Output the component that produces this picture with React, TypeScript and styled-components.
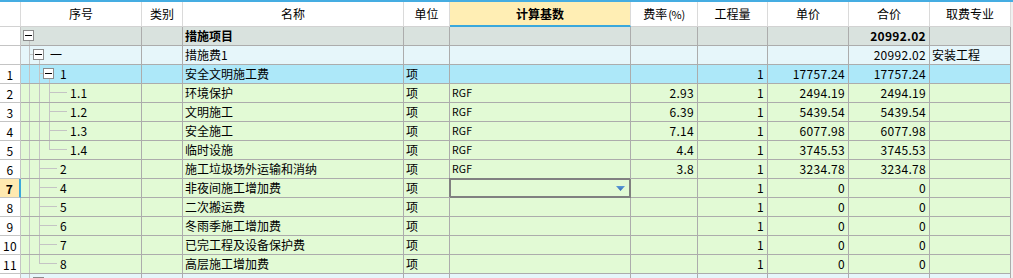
import React from 'react';
import styled, { createGlobalStyle, css } from 'styled-components';

const GlobalStyle = createGlobalStyle`
  *, *::before, *::after { box-sizing: border-box; }
  html, body { margin: 0; padding: 0; overflow: hidden; background: #f0f0f0; }
  body {
    font-family: "Noto Sans CJK SC", "Noto Sans", sans-serif;
    font-size: 12px;
    color: #000;
  }
`;

const COLS = '21px 121px 41px 221px 46px 181px 67px 70px 81px 81px 81px';

type Tone = 'head' | 'group' | 'current' | 'item';
const tones: Record<Tone, string> = {
  head: '#d9e2de',
  group: '#e6f6fa',
  current: '#ade8f9',
  item: '#e2fad5',
};

const Sheet = styled.div`
  width: 1013px;
  height: 278px;
  overflow: hidden;
  border-top: 2px solid #45ade2;
  display: flex;
  flex-direction: column;
`;

const Table = styled.div`
  width: 1011px;
  border-right: 1px solid #9c9c9c;
  background: #fff;
`;

const HeaderRow = styled.div`
  display: grid;
  grid-template-columns: ${COLS};
  height: 25px;
`;

const HeaderCell = styled.div<{ $active?: boolean }>`
  display: flex;
  align-items: center;
  justify-content: center;
  background: #fff;
  border-right: 1px solid #dadada;
  border-bottom: 1px solid #d2d2d2;
  white-space: nowrap;
  line-height: 18px;
  ${(p) =>
    p.$active &&
    css`
      background: #ffeeb4;
      font-weight: bold;
      border-bottom: 2px solid #3aa8dc;
    `}
`;

const Small = styled.span`
  font-size: 11px;
  margin-left: 1px;
  letter-spacing: -0.3px;
`;

const Row = styled.div<{ $tone: Tone }>`
  display: grid;
  grid-template-columns: ${COLS};
  height: 19px;
  background: ${(p) => tones[p.$tone]};
`;

const Cell = styled.div<{ $right?: boolean; $bold?: boolean }>`
  display: flex;
  align-items: center;
  justify-content: ${(p) => (p.$right ? 'flex-end' : 'flex-start')};
  padding: 0 3px 0 2px;
  border-right: 1px solid #acacac;
  border-bottom: 1px solid #acacac;
  white-space: nowrap;
  overflow: hidden;
  line-height: 18px;
  font-weight: ${(p) => (p.$bold ? 'bold' : 'normal')};
`;

const NumCell = styled.div<{ $current?: boolean }>`
  display: flex;
  align-items: center;
  justify-content: center;
  background: #fff;
  border-right: 1px solid #c4c4c4;
  border-bottom: 1px solid #c4c4c4;
  ${(p) =>
    p.$current &&
    css`
      background: #ffe9b0;
      font-weight: bold;
      border-right: 2px solid #3aa8dc;
    `}
`;

const Digits = styled.span<{ $bold?: boolean }>`
  font-variant-numeric: tabular-nums;
  letter-spacing: 0.3px;
  font-weight: ${(p) => (p.$bold ? 'bold' : 'normal')};
`;

const Code = styled.span`
  font-size: 10.5px;
  letter-spacing: 0.2px;
`;

type Seg = [number, number, number, number];

const TreeCell = styled(Cell)<{ $segs: Seg[]; $indent: number }>`
  padding-left: ${(p) => p.$indent}px;
  gap: 6px;
  background-image: ${(p) =>
    p.$segs.length ? p.$segs.map(() => 'linear-gradient(#c4c4c4, #c4c4c4)').join(', ') : 'none'};
  background-size: ${(p) => p.$segs.map((s) => `${s[2]}px ${s[3]}px`).join(', ') || 'auto'};
  background-position: ${(p) => p.$segs.map((s) => `${s[0]}px ${s[1]}px`).join(', ') || '0 0'};
  background-repeat: no-repeat;
`;

const Toggle = styled.span`
  flex: none;
  width: 11px;
  height: 11px;
  margin-top: -1px;
  border: 1px solid #8c8c8c;
  background: #fff;
  display: flex;
  align-items: center;
  justify-content: center;
  &::before {
    content: '';
    width: 7px;
    height: 1px;
    background: #000;
  }
`;

const EditCell = styled(Cell)`
  justify-content: flex-end;
  padding-right: 5px;
  border-right-color: #808080;
  border-bottom-color: #808080;
  box-shadow: inset 1px 1px 0 #808080, inset -1px -1px 0 #808080, -1px -1px 0 0 #808080;
`;

const Arrow = () => (
  <svg width="9" height="5" viewBox="0 0 9 5">
    <defs>
      <linearGradient id="ag" x1="0" y1="0" x2="0" y2="1">
        <stop offset="0" stopColor="#5b9ad8" />
        <stop offset="1" stopColor="#2f68b0" />
      </linearGradient>
    </defs>
    <path d="M0 0 H9 L4.5 5 Z" fill="url(#ag)" />
  </svg>
);

const V0: Seg = [8, 0, 1, 19];
const V1: Seg = [18, 0, 1, 19];
const V2: Seg = [28, 0, 1, 19];

type Tree = { box?: boolean; indent: number; label?: string; segs: Seg[] };
type Data = {
  num?: string;
  tone: Tone;
  tree: Tree;
  name?: string;
  bold?: boolean;
  unit?: string;
  base?: string;
  rate?: string;
  qty?: string;
  price?: string;
  total?: string;
  spec?: string;
  editing?: boolean;
  current?: boolean;
};

const leaf3 = (label: string, last = false): Tree => ({
  indent: 49,
  label,
  segs: last ? [V0, V1, [28, 0, 1, 9], [28, 8, 18, 1]] : [V0, V1, V2, [28, 8, 18, 1]],
});
const leaf2 = (label: string, last = false): Tree => ({
  indent: 39,
  label,
  segs: last ? [V0, [18, 0, 1, 9], [18, 8, 18, 1]] : [V0, V1, [18, 8, 18, 1]],
});

const rows: Data[] = [
  { tone: 'head', tree: { box: true, indent: 2, segs: [[8, 14, 1, 5]] }, name: '措施项目', bold: true, total: '20992.02' },
  {
    tone: 'group',
    tree: { box: true, indent: 12, label: '一', segs: [V0, [8, 8, 4, 1], [18, 14, 1, 5]] },
    name: '措施费1',
    total: '20992.02',
    spec: '安装工程',
  },
  {
    num: '1',
    tone: 'current',
    tree: { box: true, indent: 22, label: '1', segs: [V0, V1, [18, 8, 4, 1], [28, 14, 1, 5]] },
    name: '安全文明施工费',
    unit: '项',
    qty: '1',
    price: '17757.24',
    total: '17757.24',
  },
  { num: '2', tone: 'item', tree: leaf3('1.1'), name: '环境保护', unit: '项', base: 'RGF', rate: '2.93', qty: '1', price: '2494.19', total: '2494.19' },
  { num: '3', tone: 'item', tree: leaf3('1.2'), name: '文明施工', unit: '项', base: 'RGF', rate: '6.39', qty: '1', price: '5439.54', total: '5439.54' },
  { num: '4', tone: 'item', tree: leaf3('1.3'), name: '安全施工', unit: '项', base: 'RGF', rate: '7.14', qty: '1', price: '6077.98', total: '6077.98' },
  { num: '5', tone: 'item', tree: leaf3('1.4', true), name: '临时设施', unit: '项', base: 'RGF', rate: '4.4', qty: '1', price: '3745.53', total: '3745.53' },
  { num: '6', tone: 'item', tree: leaf2('2'), name: '施工垃圾场外运输和消纳', unit: '项', base: 'RGF', rate: '3.8', qty: '1', price: '3234.78', total: '3234.78' },
  { num: '7', tone: 'item', tree: leaf2('4'), name: '非夜间施工增加费', unit: '项', qty: '1', price: '0', total: '0', editing: true, current: true },
  { num: '8', tone: 'item', tree: leaf2('5'), name: '二次搬运费', unit: '项', qty: '1', price: '0', total: '0' },
  { num: '9', tone: 'item', tree: leaf2('6'), name: '冬雨季施工增加费', unit: '项', qty: '1', price: '0', total: '0' },
  { num: '10', tone: 'item', tree: leaf2('7'), name: '已完工程及设备保护费', unit: '项', qty: '1', price: '0', total: '0' },
  { num: '11', tone: 'item', tree: leaf2('8', true), name: '高层施工增加费', unit: '项', qty: '1', price: '0', total: '0' },
  { tone: 'group', tree: { box: true, indent: 12, segs: [V0, [8, 8, 4, 1]] } },
];

const headers = ['序号', '类别', '名称', '单位', '计算基数', '费率', '工程量', '单价', '合价', '取费专业'];

const num = (v?: string, bold?: boolean) => (v ? <Digits $bold={bold}>{v}</Digits> : null);

export default function App() {
  return (
    <>
      <GlobalStyle />
      <Sheet>
        <Table>
          <HeaderRow>
            <HeaderCell />
            {headers.map((h) => (
              <HeaderCell key={h} $active={h === '计算基数'}>
                {h}
                {h === '费率' && <Small>(%)</Small>}
              </HeaderCell>
            ))}
          </HeaderRow>
          {rows.map((r, i) => (
            <Row key={i} $tone={r.tone}>
              <NumCell $current={r.current}>{num(r.num, r.current)}</NumCell>
              <TreeCell $segs={r.tree.segs} $indent={r.tree.indent}>
                {r.tree.box && <Toggle />}
                {r.tree.label && <Digits>{r.tree.label}</Digits>}
              </TreeCell>
              <Cell />
              <Cell $bold={r.bold}>{r.name}</Cell>
              <Cell>{r.unit}</Cell>
              {r.editing ? (
                <EditCell>
                  <Arrow />
                </EditCell>
              ) : (
                <Cell>{r.base && <Code>{r.base}</Code>}</Cell>
              )}
              <Cell $right>{num(r.rate)}</Cell>
              <Cell $right>{num(r.qty)}</Cell>
              <Cell $right>{num(r.price)}</Cell>
              <Cell $right>{num(r.total, r.bold)}</Cell>
              <Cell>{r.spec}</Cell>
            </Row>
          ))}
        </Table>
      </Sheet>
    </>
  );
}
